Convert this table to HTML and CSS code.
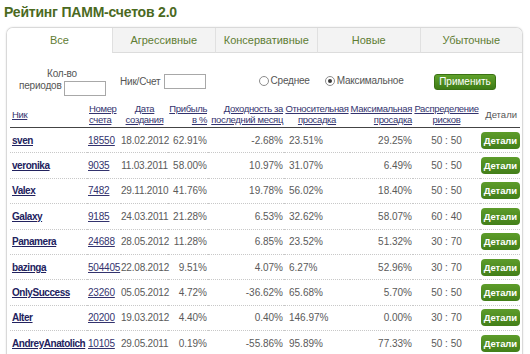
FILE: index.html
```html
<!DOCTYPE html>
<html lang="ru">
<head>
<meta charset="utf-8">
<title>Рейтинг ПАММ-счетов 2.0</title>
<link rel="stylesheet" href="styles.css">
</head>
<body>
<div class="page">
  <h1 class="title">Рейтинг ПАММ-счетов 2.0</h1>
  <div class="card">
    <div class="tabs">
      <div class="tab active">Все</div>
      <div class="tab">Агрессивные</div>
      <div class="tab">Консервативные</div>
      <div class="tab">Новые</div>
      <div class="tab">Убыточные</div>
    </div>
    <div class="filters">
      <div class="f-periods">Кол-во<br>периодов <input class="f-input" type="text"></div>
      <div class="f-nick">
        <span>Ник/Счет</span>
        <input class="f-input" type="text">
      </div>
      <div class="f-radio"><span class="radio"></span>Среднее</div>
      <div class="f-radio second"><span class="radio checked"></span>Максимальное</div>
      <button class="apply">Применить</button>
    </div>
    <table class="rating">
      <colgroup>
        <col class="c-nick"><col class="c-num"><col class="c-date"><col class="c-profit"><col class="c-month"><col class="c-rel"><col class="c-max"><col class="c-risk"><col class="c-det">
      </colgroup>
      <thead>
        <tr>
          <th class="l"><a>Ник</a></th>
          <th class="l"><a>Номер<br>счета</a></th>
          <th><a>Дата<br>создания</a></th>
          <th class="r"><a>Прибыль<br>в %</a></th>
          <th class="r"><a>Доходность за<br>последний месяц</a></th>
          <th><a>Относительная<br>просадка</a></th>
          <th class="r"><a>Максимальная<br>просадка</a></th>
          <th><a>Распределение<br>рисков</a></th>
          <th class="det">Детали</th>
        </tr>
      </thead>
      <tbody>
        <tr><td class="nick"><a>sven</a></td><td class="num"><a>18550</a></td><td class="date">18.02.2012</td><td class="r">62.91%</td><td class="r">-2.68%</td><td class="rel">23.51%</td><td class="r">29.25%</td><td class="risk">50 : 50</td><td class="btn"><span class="details">Детали</span></td></tr>
        <tr><td class="nick"><a>veronika</a></td><td class="num"><a>9035</a></td><td class="date">11.03.2011</td><td class="r">58.00%</td><td class="r">10.97%</td><td class="rel">31.07%</td><td class="r">6.49%</td><td class="risk">50 : 50</td><td class="btn"><span class="details">Детали</span></td></tr>
        <tr><td class="nick"><a>Valex</a></td><td class="num"><a>7482</a></td><td class="date">29.11.2010</td><td class="r">41.76%</td><td class="r">19.78%</td><td class="rel">56.02%</td><td class="r">18.40%</td><td class="risk">50 : 50</td><td class="btn"><span class="details">Детали</span></td></tr>
        <tr><td class="nick"><a>Galaxy</a></td><td class="num"><a>9185</a></td><td class="date">24.03.2011</td><td class="r">21.28%</td><td class="r">6.53%</td><td class="rel">32.62%</td><td class="r">58.07%</td><td class="risk">60 : 40</td><td class="btn"><span class="details">Детали</span></td></tr>
        <tr><td class="nick"><a>Panamera</a></td><td class="num"><a>24688</a></td><td class="date">28.05.2012</td><td class="r">11.28%</td><td class="r">6.85%</td><td class="rel">23.52%</td><td class="r">51.32%</td><td class="risk">30 : 70</td><td class="btn"><span class="details">Детали</span></td></tr>
        <tr><td class="nick"><a>bazinga</a></td><td class="num"><a>504405</a></td><td class="date">22.08.2012</td><td class="r">9.51%</td><td class="r">4.07%</td><td class="rel">6.27%</td><td class="r">52.96%</td><td class="risk">30 : 70</td><td class="btn"><span class="details">Детали</span></td></tr>
        <tr><td class="nick"><a>OnlySuccess</a></td><td class="num"><a>23260</a></td><td class="date">05.05.2012</td><td class="r">4.72%</td><td class="r">-36.62%</td><td class="rel">65.68%</td><td class="r">5.70%</td><td class="risk">50 : 50</td><td class="btn"><span class="details">Детали</span></td></tr>
        <tr><td class="nick"><a>Alter</a></td><td class="num"><a>20200</a></td><td class="date">19.03.2012</td><td class="r">4.40%</td><td class="r">0.40%</td><td class="rel">146.97%</td><td class="r">0.00%</td><td class="risk">30 : 70</td><td class="btn"><span class="details">Детали</span></td></tr>
        <tr><td class="nick"><a>AndreyAnatolich</a></td><td class="num"><a>10105</a></td><td class="date">29.05.2011</td><td class="r">0.19%</td><td class="r">-55.86%</td><td class="rel">95.89%</td><td class="r">77.33%</td><td class="risk">50 : 50</td><td class="btn"><span class="details">Детали</span></td></tr>
      </tbody>
    </table>
  </div>
</div>
</body>
</html>
```

FILE: styles.css
```css
html, body {
  margin: 0;
  padding: 0;
  background: #fff;
}
body {
  font-family: "Liberation Sans", Arial, sans-serif;
  font-size: 10px;
  color: #555;
}
.page {
  padding: 4px 0 0 6px;
  width: 517px;
}
.title {
  margin: 0 0 7px -2px;
  font-size: 14px;
  letter-spacing: -0.2px;
  font-weight: bold;
  color: #4b6a1f;
  line-height: 16px;
}
.card {
  border: 1px solid #d9d9d9;
  border-bottom: none;
  border-radius: 7px 7px 0 0;
  box-shadow: 0 0 2px rgba(0,0,0,0.12);
  overflow: hidden;
}
.tabs {
  display: flex;
  height: 25px;
}
.tab {
  flex: 1;
  text-align: center;
  line-height: 25px;
  font-size: 11px;
  color: #5f7d33;
  background: #f3f3f3;
  border-left: 1px solid #e0e0e0;
  border-bottom: 1px solid #dcdcdc;
}
.tab.active {
  flex: 0 0 105px;
  background: #fff;
  border-left: none;
  border-bottom-color: #fff;
}
.filters {
  display: flex;
  align-items: flex-start;
  height: 47px;
  padding: 0 0 0 12px;
  font-size: 10px;
  letter-spacing: -0.2px;
  color: #555;
}
.f-periods {
  width: 86px;
  text-align: center;
  line-height: 12px;
  margin-top: 15px;
  white-space: nowrap;
}
.f-periods .f-input {
  vertical-align: -4px;
  margin: 0;
}
.f-input {
  width: 42px;
  height: 15px;
  box-sizing: border-box;
  border: 1px solid #a8a8a8;
  padding: 0;
  margin: 0;
  background: #fff;
}
.f-nick {
  display: flex;
  align-items: center;
  gap: 3px;
  margin-left: 15px;
  margin-top: 21px;
}
.f-radio {
  display: flex;
  align-items: center;
  line-height: 12px;
  margin-top: 22px;
  margin-left: 53px;
}
.f-radio.second {
  margin-left: 15px;
}
.radio {
  width: 8px;
  height: 8px;
  border: 1px solid #8c8c8c;
  border-radius: 50%;
  margin-right: 2px;
  display: flex;
  align-items: center;
  justify-content: center;
  background: #fff;
}
.radio.checked::after {
  content: "";
  width: 4px;
  height: 4px;
  border-radius: 50%;
  background: #3a3a3a;
}
.apply {
  margin-left: auto;
  margin-right: 26px;
  margin-top: 21px;
  width: 62px;
  height: 16px;
  padding: 0;
  font-family: "Liberation Sans", Arial, sans-serif;
  font-size: 10px;
  letter-spacing: 0;
  color: #fff;
  background: linear-gradient(#5fa12b, #3e7c16);
  border: 1px solid #3a7214;
  border-radius: 3px;
  line-height: 14px;
}
.rating {
  margin: 1px 0 0 3px;
  width: 510px;
  table-layout: fixed;
  border-collapse: collapse;
}
.c-nick { width: 77px; }
.c-num { width: 34px; }
.c-date { width: 47px; }
.c-profit { width: 40px; }
.c-month { width: 76px; }
.c-rel { width: 66px; }
.c-max { width: 63px; }
.c-risk { width: 67px; }
.c-det { width: 40px; }
.rating th {
  font-weight: normal;
  font-size: 9.5px;
  letter-spacing: -0.35px;
  line-height: 11px;
  height: 26px;
  padding: 0;
  vertical-align: middle;
  text-align: center;
  white-space: nowrap;
  border-bottom: 1px solid #444;
}
.rating th a {
  color: #33336e;
  text-decoration: underline;
}
.rating th.l { text-align: left; padding-left: 2px; }
.rating th.r { text-align: right; padding-right: 1px; }
.rating th.det { color: #555; text-align: right; padding-right: 3px; letter-spacing: 0; }
.rating td {
  height: 24.4px;
  padding: 0;
  border-bottom: 1px dotted #c8c8c8;
  white-space: nowrap;
  vertical-align: middle;
  font-size: 10px;
  color: #5a5a5a;
}
.rating td.r { text-align: right; padding-right: 1px; }
.nick { padding-left: 2px !important; }
.nick a {
  font-weight: bold;
  letter-spacing: -0.45px;
  color: #22225e;
  text-decoration: underline;
}
.num { letter-spacing: -0.2px; padding-left: 1px !important; }
.num a {
  color: #33336e;
  text-decoration: underline;
}
.date { text-align: center; letter-spacing: -0.2px; }
.rel { padding-left: 5px !important; }
.risk { text-align: center; }
.btn { text-align: right; }
.details {
  display: inline-block;
  background: linear-gradient(#5d9c2a, #437f19);
  color: #fff;
  font-weight: bold;
  font-size: 9.5px;
  letter-spacing: -0.1px;
  line-height: 17px;
  padding: 0 3px;
  border-radius: 4px;
}
```
